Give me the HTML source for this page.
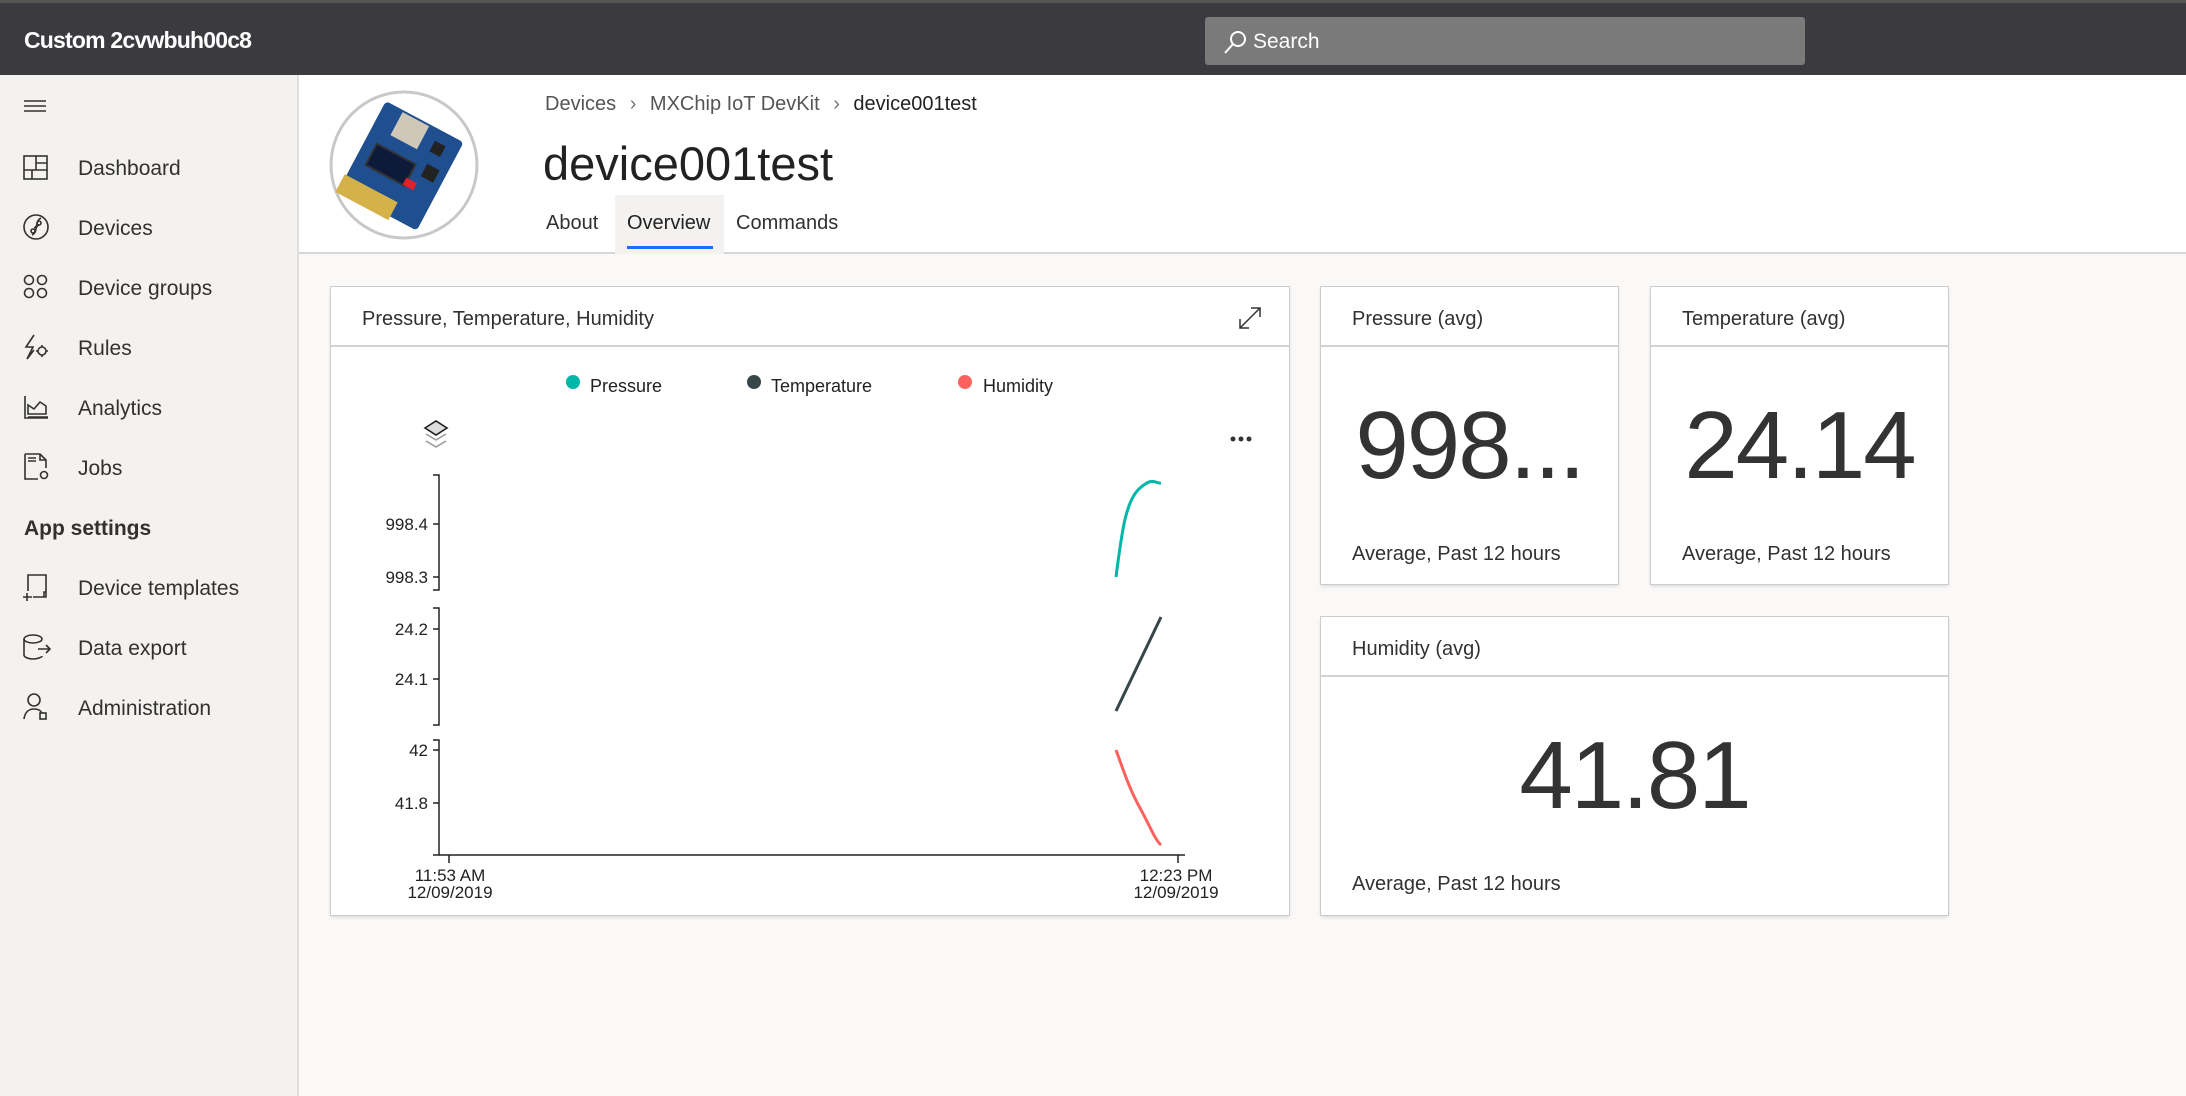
<!DOCTYPE html>
<html><head><meta charset="utf-8">
<style>
*{box-sizing:border-box;margin:0;padding:0}
body{width:2186px;height:1096px;overflow:hidden;font-family:"Liberation Sans",sans-serif;background:#faf9f8;color:#323130;position:relative}
.abs{position:absolute}
#top{left:0;top:0;width:2186px;height:75px;background:#3b3a3e;border-top:3px solid #555}
#brand{left:24px;top:27px;color:#fff;font-size:23px;font-weight:bold;letter-spacing:-0.8px}
#search{left:1205px;top:17px;width:600px;height:48px;background:#7a7a7b;border-radius:3px;color:#fff;font-size:21px}
#side{left:0;top:75px;width:299px;height:1021px;background:#f3f2f1;border-right:2px solid #e1dfdd}
.nav{position:absolute;left:78px;font-size:21px;color:#323130;top:2px}
.ico{position:absolute;left:22px}
#hdr{left:299px;top:75px;width:1887px;height:179px;background:#fff;border-bottom:2px solid #d6d6d6}
.card{position:absolute;background:#fff;box-shadow:0 0 0 1px #ccc,0 2px 4px rgba(0,0,0,.15)}
.ch{position:absolute;left:0;top:0;right:0;height:60px;border-bottom:2px solid #d2d2d2;font-size:20px;padding:21px 0 0 31px}
.big{position:absolute;left:0;right:0;font-size:96px;color:#333;text-align:center;letter-spacing:-2px}
.sub{position:absolute;left:31px;font-size:20px;color:#323130}
</style></head><body>
<div id="top" class="abs"></div>
<div id="brand" class="abs">Custom 2cvwbuh00c8</div>
<div id="search" class="abs">
<svg class="abs" style="left:18px;top:12px" width="26" height="26" viewBox="0 0 26 26"><circle cx="15" cy="10" r="7" fill="none" stroke="#fff" stroke-width="2"/><line x1="10" y1="15" x2="2" y2="24" stroke="#fff" stroke-width="2"/></svg>
<span class="abs" style="left:48px;top:13px">Search</span></div>

<div id="side" class="abs">
<svg class="ico" style="top:24px" width="26" height="14"><path d="M2 2h22M2 7h22M2 12h22" stroke="#323130" stroke-width="1.5"/></svg>
<svg class="ico" style="top:79px" width="28" height="28" viewBox="0 0 28 28" fill="none" stroke="#323130" stroke-width="1.6"><rect x="2" y="2" width="23" height="23"/><path d="M14 2v14M14 9h11M2 16h23M10 16v9"/></svg>
<div class="nav" style="top:82px">Dashboard</div>
<svg class="ico" style="top:138px" width="28" height="28" viewBox="0 0 28 28" fill="none" stroke="#323130" stroke-width="1.6"><circle cx="14" cy="14" r="12"/><path d="M19 5c-6 3-2 8-7 10M10 22c6-3 2-8 7-10"/><circle cx="11" cy="18" r="2"/><circle cx="17" cy="10" r="2"/></svg>
<div class="nav" style="top:142px">Devices</div>
<svg class="ico" style="top:198px" width="28" height="28" viewBox="0 0 28 28" fill="none" stroke="#323130" stroke-width="1.6"><circle cx="7" cy="7" r="4.5"/><circle cx="20" cy="7" r="4.5"/><circle cx="7" cy="20" r="4.5"/><circle cx="20" cy="20" r="4.5"/></svg>
<div class="nav" style="top:202px">Device groups</div>
<svg class="ico" style="top:258px" width="28" height="28" viewBox="0 0 28 28" fill="none" stroke="#323130" stroke-width="1.6"><path d="M12 2L4 14h7l-6 12 7-9"/><circle cx="20" cy="18" r="4"/><path d="M20 12v2M20 22v2M14 18h2M24 18h2"/></svg>
<div class="nav" style="top:262px">Rules</div>
<svg class="ico" style="top:318px" width="28" height="28" viewBox="0 0 28 28" fill="none" stroke="#323130" stroke-width="1.6"><path d="M3 3v22h23M6 21V12l6 4 6-7 6 4v8zM6 24h20"/></svg>
<div class="nav" style="top:322px">Analytics</div>
<svg class="ico" style="top:377px" width="30" height="30" viewBox="0 0 30 30" fill="none" stroke="#323130" stroke-width="1.6"><path d="M3 2h15l6 6v8M3 2v25h13M18 2v6h6M6 6h8M6 9h8"/><circle cx="22" cy="23" r="3.5"/></svg>
<div class="nav" style="top:382px">Jobs</div>
<div class="nav" style="top:442px;left:24px;font-weight:bold">App settings</div>
<svg class="ico" style="top:498px" width="28" height="30" viewBox="0 0 28 30" fill="none" stroke="#323130" stroke-width="1.6"><path d="M6 18V2h18v22H11M22 24v-5h2M1 24h9M5 20v8"/></svg>
<div class="nav" style="top:502px">Device templates</div>
<svg class="ico" style="top:558px" width="30" height="28" viewBox="0 0 30 28" fill="none" stroke="#323130" stroke-width="1.6"><ellipse cx="11" cy="6" rx="9" ry="4"/><path d="M2 6v16c0 2 4 4 9 4s9-2 9-3M16 16h12M24 12l4 4-4 4"/></svg>
<div class="nav" style="top:562px">Data export</div>
<svg class="ico" style="top:617px" width="30" height="30" viewBox="0 0 30 30" fill="none" stroke="#323130" stroke-width="1.6"><circle cx="12" cy="8" r="6"/><path d="M2 27c1-7 5-10 10-10s7 2 8 4"/><rect x="18" y="21" width="6" height="6"/></svg>
<div class="nav" style="top:622px">Administration</div>
</div>

<div id="hdr" class="abs"></div>
<svg class="abs" style="left:328px;top:89px" width="152" height="152" viewBox="0 0 152 152">
<circle cx="76" cy="76" r="73" fill="#fff" stroke="#c8c8c8" stroke-width="3"/>
<g transform="rotate(28 76 76)">
<rect x="30" y="28" width="88" height="100" rx="4" fill="#1f4f8f"/>
<rect x="28" y="112" width="60" height="20" fill="#d5b14a"/>
<rect x="50" y="30" width="30" height="26" fill="#cfc8b8"/>
<rect x="42" y="70" width="44" height="24" fill="#0e1a3a" stroke="#333" stroke-width="2"/>
<rect x="84" y="86" width="12" height="8" fill="#e0202a"/>
<rect x="92" y="40" width="12" height="12" fill="#222"/>
<rect x="96" y="64" width="14" height="14" fill="#222"/>
</g></svg>
<div class="abs" style="left:545px;top:93px;font-size:20px;color:#555">Devices <span style="margin:0 8px;color:#777">&#x203A;</span> MXChip IoT DevKit <span style="margin:0 8px;color:#777">&#x203A;</span> <span style="color:#222">device001test</span></div>
<div class="abs" style="left:543px;top:136px;font-size:47px;color:#222">device001test</div>
<div class="abs" style="left:615px;top:195px;width:109px;height:59px;background:#f3f2f1"></div>
<div class="abs" style="left:546px;top:212px;font-size:20px;color:#323130">About</div>
<div class="abs" style="left:627px;top:212px;font-size:20px;color:#222">Overview</div>
<div class="abs" style="left:627px;top:246px;width:86px;height:3px;background:#1a6ff0"></div>
<div class="abs" style="left:736px;top:212px;font-size:20px;color:#323130">Commands</div>

<div class="card" style="left:331px;top:287px;width:958px;height:628px">
<div class="ch">Pressure, Temperature, Humidity</div>
<svg class="abs" style="left:906px;top:18px" width="26" height="26" viewBox="0 0 26 26" fill="none" stroke="#333" stroke-width="1.5"><path d="M3 23L23 3M14 3h9v9M3 14v9h9"/></svg>
<svg class="abs" style="left:0;top:60px" width="958" height="568" viewBox="331 347 958 568" font-family="Liberation Sans,sans-serif">
<circle cx="573" cy="382" r="7" fill="#00b7a8"/><text x="590" y="392" font-size="18" fill="#222">Pressure</text>
<circle cx="754" cy="382" r="7" fill="#374649"/><text x="771" y="392" font-size="18" fill="#222">Temperature</text>
<circle cx="965" cy="382" r="7" fill="#fd625e"/><text x="983" y="392" font-size="18" fill="#222">Humidity</text>
<path d="M425 428l11-7 11 7-11 7z" fill="#ddd" stroke="#222" stroke-width="1.6"/>
<path d="M426 434l10 6 10-6M426 441l10 6 10-6" fill="none" stroke="#999" stroke-width="1.6"/>
<circle cx="1233" cy="439" r="2.5" fill="#333"/><circle cx="1241" cy="439" r="2.5" fill="#333"/><circle cx="1249" cy="439" r="2.5" fill="#333"/>
<g stroke="#222" stroke-width="1.5" fill="none">
<path d="M433 475h6v115h-6M433 524h6M433 577h6"/>
<path d="M433 608h6v117h-6M433 629h6M433 679h6"/>
<path d="M433 740h6v115h-6M433 750h6M433 803h6"/>
<path d="M439 855h746M449 855v8M1178 855v8"/>
</g>
<g font-size="17" fill="#222" text-anchor="end">
<text x="428" y="530">998.4</text><text x="428" y="583">998.3</text>
<text x="428" y="635">24.2</text><text x="428" y="685">24.1</text>
<text x="428" y="756">42</text><text x="428" y="809">41.8</text>
</g>
<g font-size="17" fill="#222" text-anchor="middle">
<text x="450" y="881">11:53 AM</text><text x="450" y="898">12/09/2019</text>
<text x="1176" y="881">12:23 PM</text><text x="1176" y="898">12/09/2019</text>
</g>
<path d="M1116 577C1122 530 1126 500 1140 488S1155 484 1161 483" stroke="#00b7a8" stroke-width="3" fill="none"/>
<path d="M1116 711L1161 617" stroke="#374649" stroke-width="3" fill="none"/>
<path d="M1116 750C1125 775 1130 790 1140 808S1155 840 1161 845" stroke="#fd625e" stroke-width="3" fill="none"/>
</svg>
</div>

<div class="card" style="left:1321px;top:287px;width:297px;height:297px">
<div class="ch">Pressure (avg)</div>
<div class="big" style="top:104px">998...</div>
<div class="sub" style="top:256px">Average, Past 12 hours</div>
</div>
<div class="card" style="left:1651px;top:287px;width:297px;height:297px">
<div class="ch">Temperature (avg)</div>
<div class="big" style="top:104px">24.14</div>
<div class="sub" style="top:256px">Average, Past 12 hours</div>
</div>
<div class="card" style="left:1321px;top:617px;width:627px;height:298px">
<div class="ch">Humidity (avg)</div>
<div class="big" style="top:104px">41.81</div>
<div class="sub" style="top:256px">Average, Past 12 hours</div>
</div>
</body></html>
